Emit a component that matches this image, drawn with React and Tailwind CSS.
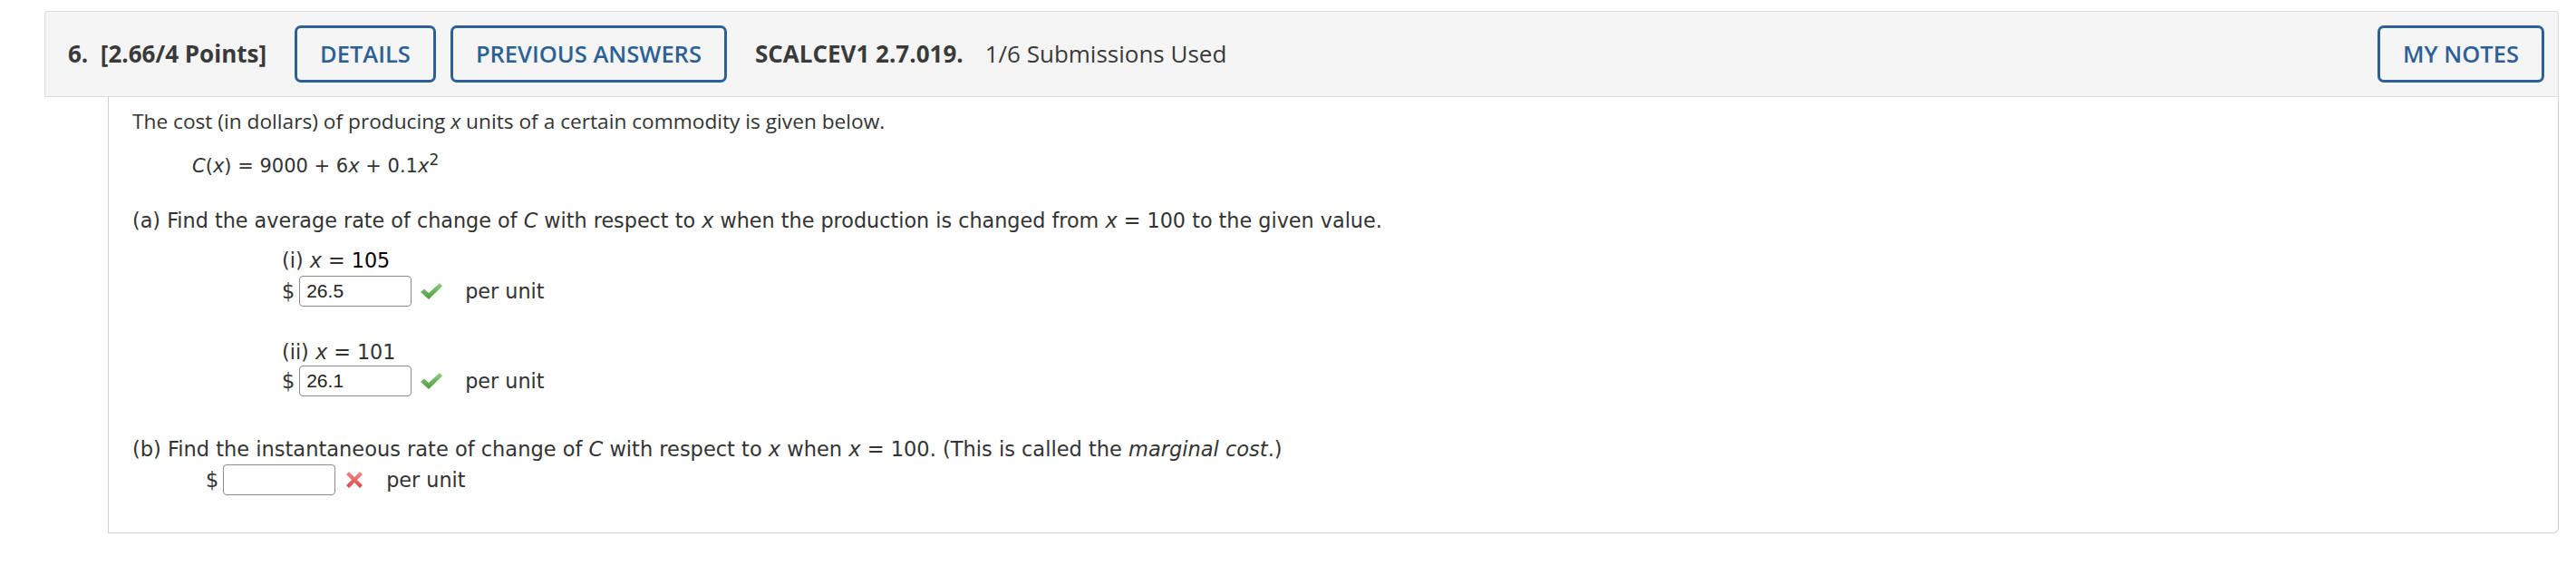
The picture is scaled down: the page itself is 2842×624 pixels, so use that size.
import React from "react";

const Check = () => (
  <svg width="26" height="22" viewBox="0 0 26 22" className="block">
    <defs>
      <linearGradient id="cg" x1="0" y1="0" x2="0" y2="1">
        <stop offset="0" stopColor="#8fd07f" />
        <stop offset="1" stopColor="#4c9a3f" />
      </linearGradient>
    </defs>
    <path d="M1 12 L5 8.5 L10 13 L22 2 L25 5.5 L10 20 Z" fill="url(#cg)" />
  </svg>
);

const Cross = () => (
  <svg width="22" height="22" viewBox="0 0 22 22" className="block">
    <defs>
      <linearGradient id="xg" x1="0" y1="0" x2="0" y2="1">
        <stop offset="0" stopColor="#f08a8a" />
        <stop offset="1" stopColor="#d84848" />
      </linearGradient>
    </defs>
    <path
      d="M2 5 L5 2 L11 8 L17 2 L20 5 L14 11 L20 17 L17 20 L11 14 L5 20 L2 17 L8 11 Z"
      fill="url(#xg)"
    />
  </svg>
);

const Answer = ({ value, ok, cls }) => (
  <div className={`flex items-center h-[34px] ${cls}`}>
    <span className="mr-[5px]">$</span>
    <div
      className="w-[124px] h-[34px] border border-[#8a8a8a] rounded-[4px] bg-white flex items-center pl-[7px] text-[21px] text-[#222]"
      style={{ fontFamily: '"Liberation Sans", Arial, sans-serif' }}
    >
      {value}
    </div>
    <div className={ok ? "ml-[9px] mr-[24px]" : "ml-[10px] mr-[24px]"}>{ok ? <Check /> : <Cross />}</div>
    <span>per unit</span>
  </div>
);

export default function App() {
  const btn =
    "h-[63px] px-[25px] border-[3px] border-[#2d6196] rounded-[7px] text-[#2d6196] text-[25.5px] font-semibold flex items-center";
  return (
    <div className="w-[2842px] h-[624px] bg-white pt-[12px] pl-[49px]" style={{ fontFamily: '"Open Sans", sans-serif' }}>
      <div className="w-[2774px]">
        <div className="h-[95px] bg-[#f5f5f5] border border-[#dcdcdc] rounded-t-[3px] flex items-center pl-[25px] pr-[15px] text-[#3a3a3a]">
          <span className="text-[26px] font-bold whitespace-pre">6.  [2.66/4 Points]</span>
          <button className={`${btn} ml-[31px]`}>DETAILS</button>
          <button className={`${btn} ml-[16px]`}>PREVIOUS ANSWERS</button>
          <span className="ml-[31px] text-[26px] font-bold">SCALCEV1 2.7.019.</span>
          <span className="ml-[24px] text-[26px]">1/6 Submissions Used</span>
          <button className={`${btn} ml-auto`}>MY NOTES</button>
        </div>
        <div
          className="ml-[70px] h-[481px] border-l border-r border-b border-[#d0d0d0] rounded-br-[6px] pl-[26px] pt-[13px] text-[22.3px] leading-[28px] text-[#333]"
          style={{ fontFamily: '"DejaVu Sans", Verdana, sans-serif' }}
        >
          <div className="text-[22.7px]" style={{ fontFamily: '"Open Sans", sans-serif' }}>
            The cost (in dollars) of producing <i>x</i> units of a certain commodity is given below.
          </div>
          <div className="mt-[21px] ml-[66px] text-[21px]">
            <i>C</i>(<i>x</i>) = 9000 + 6<i>x</i> + 0.1<i>x</i>
            <sup className="text-[17px]">2</sup>
          </div>
          <div className="mt-[32px]">
            (a) Find the average rate of change of <i>C</i> with respect to <i>x</i> when the production is changed from <i>x</i> = 100 to the given value.
          </div>
          <div className="mt-[16px] ml-[165px]">
            (i) <i>x</i> = <span className="text-black">105</span>
          </div>
          <Answer value="26.5" ok cls="mt-[3px] ml-[165px]" />
          <div className="mt-[36px] ml-[165px]">
            (ii) <i>x</i> = 101
          </div>
          <Answer value="26.1" ok cls="mt-[1px] ml-[165px]" />
          <div className="mt-[44px] text-[22.5px]">
            (b) Find the instantaneous rate of change of <i>C</i> with respect to <i>x</i> when <i>x</i> = 100. (This is called the <i>marginal cost</i>.)
          </div>
          <Answer value="" ok={false} cls="mt-[3px] ml-[81px]" />
        </div>
      </div>
    </div>
  );
}
